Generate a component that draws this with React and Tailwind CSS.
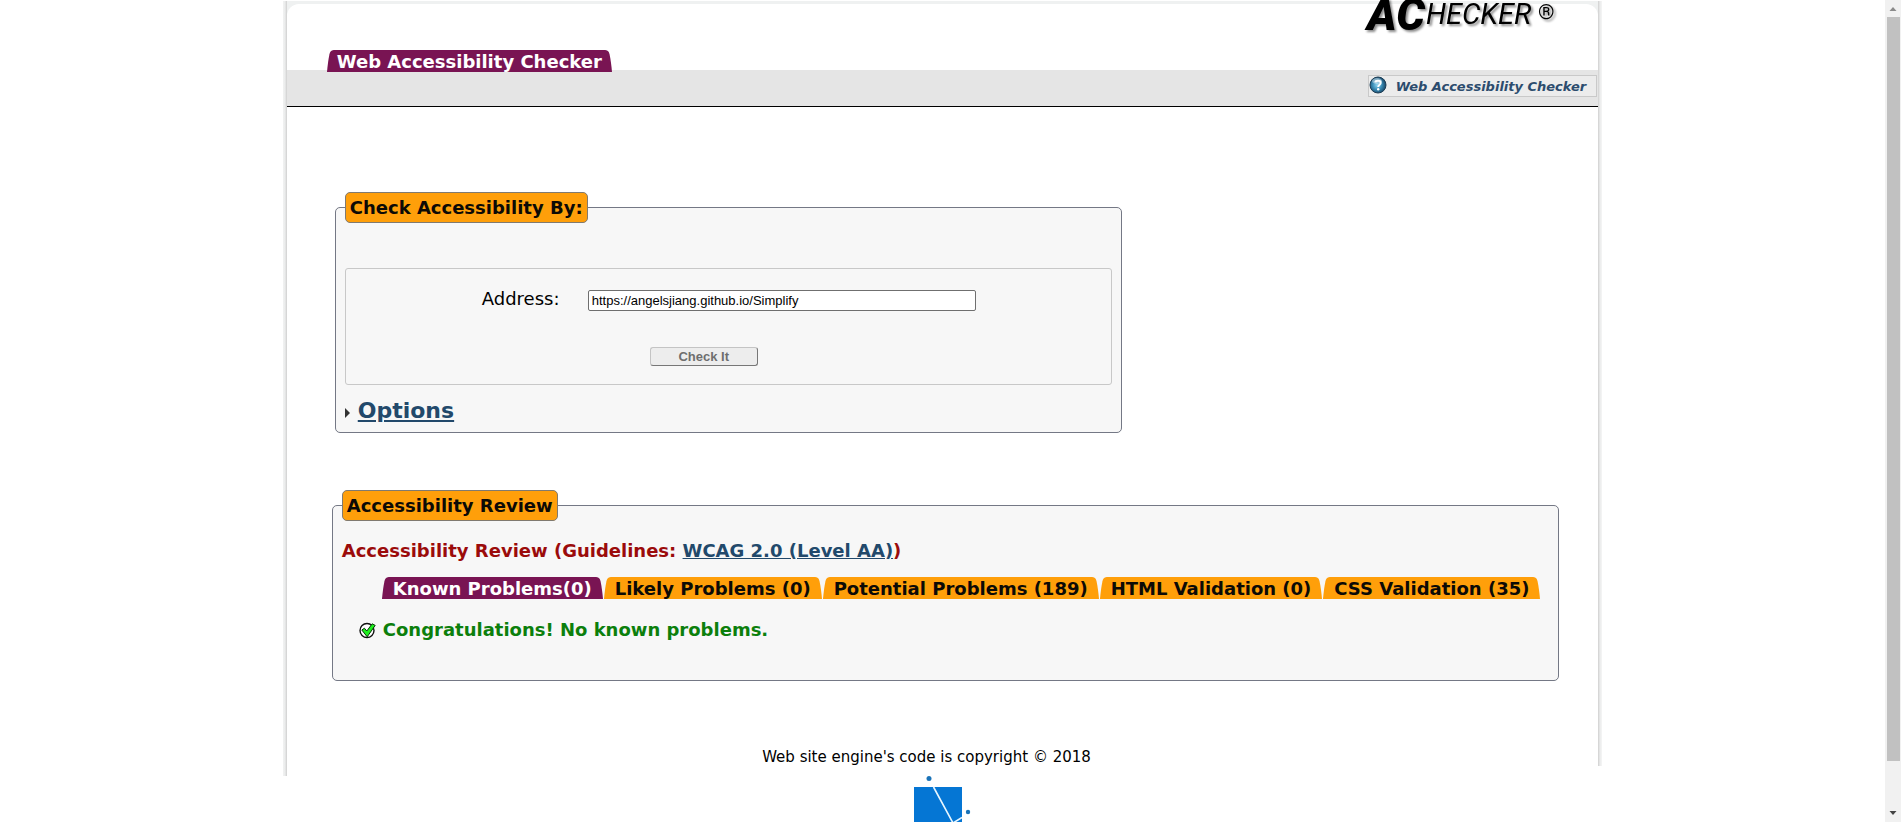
import React, { useState } from "react";

function Logo() {
  return (
    <svg
      className="h-9 w-[190px] overflow-visible drop-shadow-[2px_2px_1px_rgba(0,0,0,0.45)]"
      viewBox="0 0 190 36"
      role="img"
      aria-label="AChecker"
    >
      <g fontFamily="Roboto, sans-serif" fill="#000">
        <text x="1" y="29" fontSize="45" fontWeight="900" fontStyle="italic">AC</text>
        <text x="60" y="23" fontSize="29" fontStyle="italic">HECKER</text>
        <text x="172" y="18" fontSize="21">®</text>
      </g>
    </svg>
  );
}

function HelpIcon() {
  return (
    <svg className="size-[18px] shrink-0" viewBox="0 0 18 18" aria-hidden="true">
      <defs>
        <radialGradient id="help" cx="0.45" cy="0.5" r="0.58">
          <stop offset="0" stopColor="#8fd6f2" />
          <stop offset="0.5" stopColor="#3a8cb5" />
          <stop offset="1" stopColor="#143e5e" />
        </radialGradient>
      </defs>
      <circle cx="9" cy="9" r="8" fill="url(#help)" stroke="#1d3d54" />
      <ellipse cx="8" cy="5" rx="5" ry="3" fill="#fff" opacity="0.4" />
      <path d="M6.3 6.4C6.5 4.4 11.7 4 11.7 6.9C11.7 8.7 9.2 8.8 9.2 11" fill="none" stroke="#fff" strokeWidth="2" />
      <circle cx="9.2" cy="13.3" r="1.2" fill="#fff" />
    </svg>
  );
}

function CheckIcon() {
  return (
    <svg className="size-[17px] shrink-0" viewBox="0 0 17 17" aria-hidden="true">
      <circle cx="8" cy="8.5" r="7" fill="#fff" stroke="#111" strokeWidth="1.4" />
      <path d="M2.8 8L5.4 6.2L7.8 9L13.2 1.8L16.2 3.4L8.2 14.8Z" fill="#1ff01f" stroke="#063a06" strokeWidth="1" />
    </svg>
  );
}

function TabCap({ flip }) {
  return (
    <svg
      className={flip ? "h-[22px] w-2 shrink-0 -scale-x-100" : "h-[22px] w-2 shrink-0"}
      viewBox="0 0 8 22"
      fill="currentColor"
      aria-hidden="true"
    >
      <path d="M0 22C0.6 15 1.4 9 2.4 4.4C3.2 1.2 4.6 0 8 0V22Z" />
    </svg>
  );
}

const tabs = [
  "Known Problems(0)",
  "Likely Problems (0)",
  "Potential Problems (189)",
  "HTML Validation (0)",
  "CSS Validation (35)",
];

const legend =
  "ml-[9px] rounded-[5px] border border-[#807a70] bg-[#ff9f0a] px-1 text-lg leading-[29px] font-bold whitespace-nowrap text-[#0c0a06]";

function CheckForm() {
  const [address, setAddress] = useState("https://angelsjiang.github.io/Simplify");
  return (
    <form className="mt-[85px] ml-12 w-[60%]" onSubmit={(e) => e.preventDefault()}>
      <fieldset className="rounded-[5px] border border-[#747885] bg-[#f7f7f7]">
        <legend className={legend}>Check Accessibility By:</legend>
        <div className="px-[9px] pb-[7px]">
          <div className="mt-[45px] flex flex-col rounded-[3px] border border-[#c8c8c8] pt-[17px] pb-[18px]">
            <div className="flex items-center pl-[136px]">
              <label htmlFor="address" className="w-[106px] text-lg leading-6">
                Address:
              </label>
              <input
                id="address"
                type="text"
                value={address}
                onChange={(e) => setAddress(e.target.value)}
                className="mt-1 h-[21px] w-[388px] rounded-[2px] border border-[#6f6f6f] bg-white px-[3px] font-['Liberation_Sans',sans-serif] text-[13px] text-black"
              />
            </div>
            <button
              type="submit"
              className="mt-9 ml-[304px] h-[19px] w-[108px] rounded-[3px] border border-t-[#c4c4c4] border-r-[#777] border-b-[#777] border-l-[#c4c4c4] bg-[#ededed] text-center font-['Liberation_Sans',sans-serif] text-[13px] leading-4 font-bold text-[#6e6e6e]"
            >
              Check It
            </button>
          </div>
          <h2 className="mt-3 flex items-center gap-2">
            <svg className="mt-1 h-[10px] w-[5px]" viewBox="0 0 5 10" aria-hidden="true">
              <path d="M0 0L5 5L0 10Z" fill="#333" />
            </svg>
            <a href="#options" className="text-[22px] leading-7 font-bold text-[#22496b] underline decoration-2 underline-offset-2">
              Options
            </a>
          </h2>
        </div>
      </fieldset>
    </form>
  );
}

function Review() {
  const [active, setActive] = useState(0);
  return (
    <fieldset className="mt-[57px] mr-[39px] ml-[45px] rounded-[5px] border border-[#747885] bg-[#f7f7f7]">
      <legend className={legend}>Accessibility Review</legend>
      <div className="px-[9px] pt-[18px] pb-[38px] text-lg font-bold">
        <h3 className="leading-6 text-[#9b0b0b]">
          Accessibility Review (Guidelines:{" "}
          <a href="#wcag" className="text-[#22496b] underline">WCAG 2.0 (Level AA)</a>)
        </h3>
        <div role="tablist" className="mt-[14px] ml-10 flex gap-px">
          {tabs.map((tab, i) => (
            <button
              key={tab}
              type="button"
              role="tab"
              aria-selected={i === active}
              onClick={() => setActive(i)}
              className={i === active ? "flex h-[22px] text-[#791453]" : "flex h-[22px] text-[#ff9f0a]"}
            >
              <TabCap />
              <span
                className={
                  i === active
                    ? "h-[22px] overflow-hidden bg-[#791453] px-[3px] leading-6 whitespace-nowrap text-white"
                    : "h-[22px] overflow-hidden bg-[#ff9f0a] px-[3px] leading-6 whitespace-nowrap text-[#0c0a06]"
                }
              >
                {tab}
              </span>
              <TabCap flip />
            </button>
          ))}
        </div>
        <p className="mt-[19px] ml-[17px] flex items-center gap-[7px] leading-6 text-[#0c7f0c]">
          <CheckIcon />
          Congratulations! No known problems.
        </p>
      </div>
    </fieldset>
  );
}

function FooterMark() {
  return (
    <svg className="h-[60px] w-[60px]" viewBox="0 0 60 60" aria-hidden="true">
      <rect x="0" y="11" width="48" height="49" fill="#0576d4" />
      <path d="M19.5 11L39 47L48 41.5M39 47L45 59" fill="none" stroke="#e8f6ff" strokeWidth="1.6" />
      <circle cx="15" cy="2.6" r="2.5" fill="#1a73b8" />
      <circle cx="54" cy="36" r="2.2" fill="#1a73b8" />
    </svg>
  );
}

export default function App() {
  return (
    <div className="flex h-screen overflow-hidden bg-white font-[Verdana,'DejaVu_Sans',sans-serif] text-black">
      <div className="flex min-w-0 flex-1 flex-col items-center pt-px">
        <div className="w-[70%]">
          <div className="flex bg-white">
            <div className="w-1 shrink-0 bg-linear-to-r from-[#f1f2f2] via-[#ebecec] to-[#cfcfcf]" />
            <div className="min-w-0 flex-1">
              <div className="bg-[#eff1f1] pt-[3px]">
                <header className="rounded-t-xl bg-white">
                  <div className="flex items-end justify-between pr-[42px] pl-10">
                    <h1 className="relative top-0.5 flex h-[22px] text-[#791453]">
                      <TabCap />
                      <span className="h-[22px] overflow-hidden bg-[#791453] px-0.5 text-lg leading-6 font-bold whitespace-nowrap text-white">
                        Web Accessibility Checker
                      </span>
                      <TabCap flip />
                    </h1>
                    <div className="-mt-[3px] h-[69px]">
                      <Logo />
                    </div>
                  </div>
                </header>
              </div>
              <nav className="flex h-[37px] items-start justify-end border-b border-black bg-[#e5e5e5] pt-[5px]">
                <a
                  href="#help"
                  className="mr-px flex h-[22px] items-start gap-[9px] border border-[#c9c9c9] bg-[#ececec] pr-[10px] text-[13px] leading-[22px] font-bold text-[#2c4c6e] italic"
                >
                  <HelpIcon />
                  Web Accessibility Checker
                </a>
              </nav>
              <main>
                <CheckForm />
                <Review />
              </main>
              <footer className="mt-16 pr-8 pb-[7px] text-center text-[15px] leading-6">
                Web site engine&apos;s code is copyright © 2018
              </footer>
            </div>
            <div className="mb-[10px] w-1 shrink-0 bg-linear-to-r from-[#cfcfcf] via-[#ebecec] to-[#f5f5f5]" />
          </div>
          <div className="flex justify-center pl-0.5">
            <FooterMark />
          </div>
        </div>
      </div>
      <div className="flex w-4 shrink-0 flex-col items-center bg-[#f1f1f1]" aria-hidden="true">
        <svg className="h-[17px] w-4 shrink-0" viewBox="0 0 16 17">
          <path d="M4.5 11L8 7L11.5 11Z" fill="#8a8a8a" />
        </svg>
        <div className="w-[13px] flex-1 bg-[#c1c1c1]" />
        <svg className="mt-11 h-[17px] w-4 shrink-0" viewBox="0 0 16 17">
          <path d="M4.5 6L8 10L11.5 6Z" fill="#444" />
        </svg>
      </div>
    </div>
  );
}
